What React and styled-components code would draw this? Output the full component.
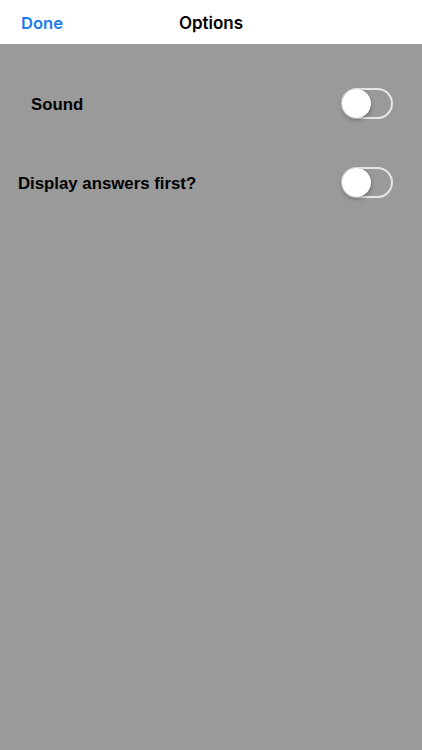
import React, { useState } from "react";
import styled, { createGlobalStyle } from "styled-components";

const Global = createGlobalStyle`
  html, body { margin: 0; padding: 0; background: #9a9a9a; }
  body { font-family: "Liberation Sans", Arial, sans-serif; }
`;

const Screen = styled.div`
  width: 422px;
  height: 750px;
  background: #9a9a9a;
  display: flex;
  flex-direction: column;
`;

const NavBar = styled.div`
  height: 44px;
  background: #ffffff;
  display: grid;
  grid-template-columns: 1fr auto 1fr;
  align-items: center;
  padding: 2px 21px 0;
  box-sizing: border-box;
  font-family: Inter, "Liberation Sans", sans-serif;
`;

const NavButton = styled.button`
  justify-self: start;
  background: none;
  border: none;
  padding: 0;
  font-family: inherit;
  font-size: 16.6px;
  font-weight: 600;
  color: #1b7cf0;
  cursor: pointer;
`;

const NavTitle = styled.div`
  font-size: 17px;
  color: #000;
  font-weight: 600;
`;

const List = styled.div`
  display: flex;
  flex-direction: column;
  padding-top: 44px;
  gap: 48px;
`;

const Row = styled.div`
  display: flex;
  align-items: center;
  justify-content: space-between;
  height: 31px;
  padding-left: ${(p) => p.$indent}px;
  padding-right: 29px;
`;

const Label = styled.span`
  font-size: 16.8px;
  font-weight: 700;
  color: #000;
  padding-top: 2px;
`;

const Track = styled.button`
  position: relative;
  width: 52px;
  height: 31px;
  border-radius: 16px;
  border: 2px solid ${(p) => (p.$on ? "#4cd964" : "#e6e6e6")};
  background: ${(p) => (p.$on ? "#4cd964" : "transparent")};
  box-sizing: border-box;
  padding: 0;
  cursor: pointer;
`;

const Knob = styled.span`
  position: absolute;
  top: -1px;
  left: ${(p) => (p.$on ? "21px" : "-1px")};
  width: 29px;
  height: 29px;
  border-radius: 50%;
  background: #fff;
  box-shadow: 0 2px 4px rgba(0, 0, 0, 0.3), 0 0 1px rgba(0, 0, 0, 0.25);
  transition: left 0.2s;
`;

function Toggle() {
  const [on, setOn] = useState(false);
  return (
    <Track $on={on} onClick={() => setOn(!on)} aria-pressed={on}>
      <Knob $on={on} />
    </Track>
  );
}

export default function App() {
  return (
    <Screen>
      <Global />
      <NavBar>
        <NavButton>Done</NavButton>
        <NavTitle>Options</NavTitle>
        <span />
      </NavBar>
      <List>
        <Row $indent={31}>
          <Label>Sound</Label>
          <Toggle />
        </Row>
        <Row $indent={18}>
          <Label>Display answers first?</Label>
          <Toggle />
        </Row>
      </List>
    </Screen>
  );
}
